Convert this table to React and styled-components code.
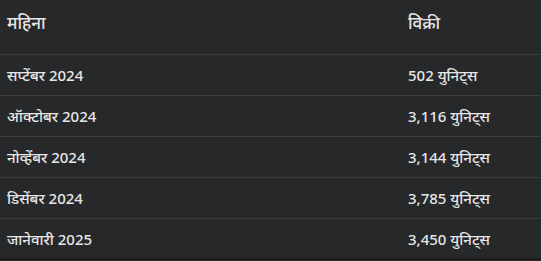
import styled, { createGlobalStyle } from "styled-components";

const GlobalStyle = createGlobalStyle`
  html, body {
    margin: 0;
    padding: 0;
    background: #27282a;
  }
  body {
    font-family: "Noto Sans", "Noto Sans Devanagari", Roboto, sans-serif;
    color: #e6e6e6;
  }
`;

/* styled components */

const Table = styled.div`
  width: 541px;
  height: 261px;
  overflow: hidden;
  background: #27282a;
  display: flex;
  flex-direction: column;
`;
const Row = styled.div`
  display: grid;
  grid-template-columns: 400px 1fr;
  align-items: center;
  height: ${(p) => (p.$head ? "55px" : "41px")};
  padding-bottom: ${(p) => (p.$head ? "9px" : "0")};
  box-sizing: border-box;
  border-bottom: 1px solid #3c3d3f;
  &:last-child {
    border-bottom: 2px solid #1c1d1e;
  }
`;
const Cell = styled.div`
  padding: 0 8px 0 7px;
  font-size: ${(p) => (p.$head ? "17px" : "15px")};
  font-weight: 500;
  white-space: nowrap;
  & + & {
    padding-left: 8px;
  }
`;

const rows = [
  ["सप्टेंबर 2024", "502 युनिट्स"],
  ["ऑक्टोबर 2024", "3,116 युनिट्स"],
  ["नोव्हेंबर 2024", "3,144 युनिट्स"],
  ["डिसेंबर 2024", "3,785 युनिट्स"],
  ["जानेवारी 2025", "3,450 युनिट्स"],
];

export default function App() {
  return (
    <>
      <GlobalStyle />
      <Table>
        <Row $head>
          <Cell $head>महिना</Cell>
          <Cell $head>विक्री</Cell>
        </Row>
        {rows.map(([month, sales]) => (
          <Row key={month}>
            <Cell>{month}</Cell>
            <Cell>{sales}</Cell>
          </Row>
        ))}
      </Table>
    </>
  );
}
